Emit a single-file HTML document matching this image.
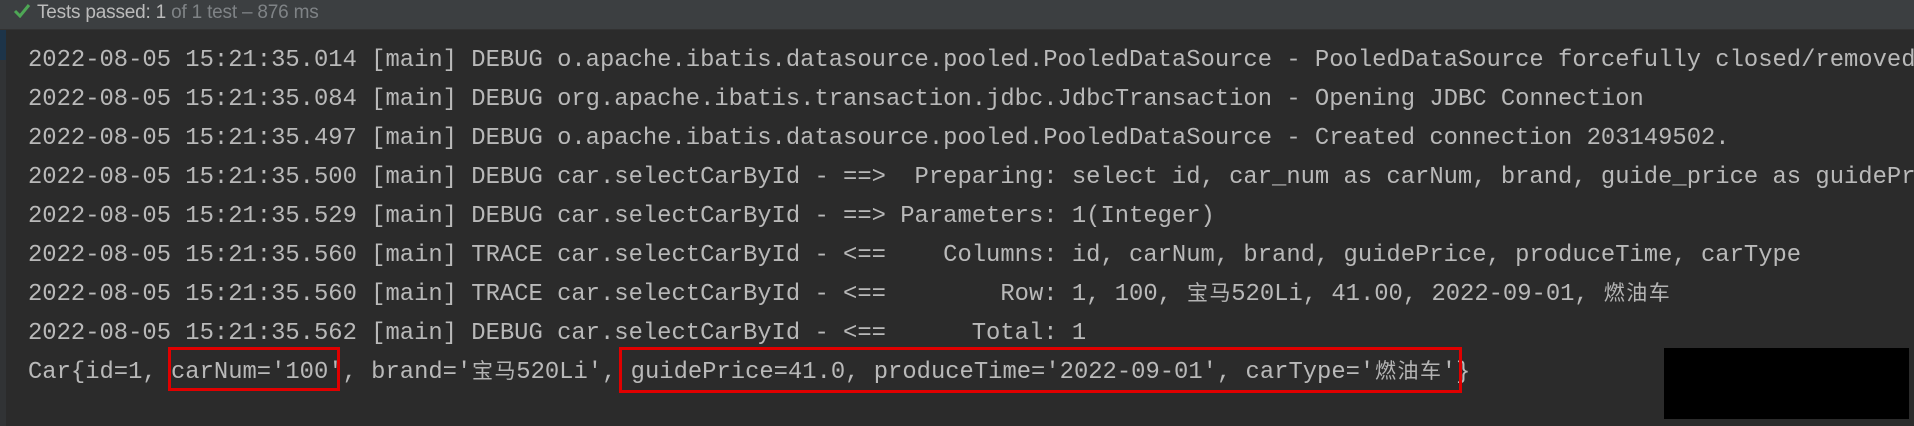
<!DOCTYPE html>
<html><head><meta charset="utf-8"><style>
html,body{margin:0;padding:0;width:1914px;height:426px;overflow:hidden;background:#2b2b2b}
.hdr{position:absolute;left:0;top:0;width:1914px;height:30px;background:#3c3f41;border-bottom:1px solid #323232;box-sizing:border-box}
.hdr .t{position:absolute;left:37px;top:2px;font:19px "Liberation Sans",sans-serif;color:#bbbbbb;white-space:nowrap;letter-spacing:-0.2px}
.hdr .g{color:#7f8386}
.gut{position:absolute;left:0;top:30px;width:6px;height:396px;background:#313335}
.gut2{position:absolute;left:0;top:30px;width:6px;height:30px;background:#1d3449}
.log{position:absolute;left:28px;top:41px;font:23.83px/39px "Liberation Mono",monospace;color:#b9b9b9;white-space:pre}
.c{display:inline-block;width:22.5px;font-family:"Noto Sans CJK SC",sans-serif;font-size:21px;text-align:center;line-height:1;color:#b4b4b4}
.box{position:absolute;border:3px solid #e00000;box-sizing:border-box}
.blk{position:absolute;left:1664px;top:348px;width:245px;height:71px;background:#000}
</style></head><body>
<div class="hdr">
<svg style="position:absolute;left:13px;top:3px" width="18" height="15" viewBox="0 0 18 15"><path d="M2 8 L7 13 L16 2" fill="none" stroke="#4ea755" stroke-width="3"/></svg>
<div class="t">Tests passed: 1 <span class="g">of 1 test – 876 ms</span></div>
</div>
<div class="gut"></div><div class="gut2"></div>
<div class="log">2022-08-05 15:21:35.014 [main] DEBUG o.apache.ibatis.datasource.pooled.PooledDataSource - PooledDataSource forcefully closed/removed
2022-08-05 15:21:35.084 [main] DEBUG org.apache.ibatis.transaction.jdbc.JdbcTransaction - Opening JDBC Connection
2022-08-05 15:21:35.497 [main] DEBUG o.apache.ibatis.datasource.pooled.PooledDataSource - Created connection 203149502.
2022-08-05 15:21:35.500 [main] DEBUG car.selectCarById - ==>  Preparing: select id, car_num as carNum, brand, guide_price as guidePr
2022-08-05 15:21:35.529 [main] DEBUG car.selectCarById - ==> Parameters: 1(Integer)
2022-08-05 15:21:35.560 [main] TRACE car.selectCarById - &lt;==    Columns: id, carNum, brand, guidePrice, produceTime, carType
2022-08-05 15:21:35.560 [main] TRACE car.selectCarById - &lt;==        Row: 1, 100, <span class="c">宝</span><span class="c">马</span>520Li, 41.00, 2022-09-01, <span class="c">燃</span><span class="c">油</span><span class="c">车</span>
2022-08-05 15:21:35.562 [main] DEBUG car.selectCarById - &lt;==      Total: 1
Car{id=1, carNum='100', brand='<span class="c">宝</span><span class="c">马</span>520Li', guidePrice=41.0, produceTime='2022-09-01', carType='<span class="c">燃</span><span class="c">油</span><span class="c">车</span>'}</div>
<div class="box" style="left:168px;top:347px;width:172px;height:44px"></div>
<div class="box" style="left:619px;top:347px;width:843px;height:46px"></div>
<div class="blk"></div>
</body></html>
